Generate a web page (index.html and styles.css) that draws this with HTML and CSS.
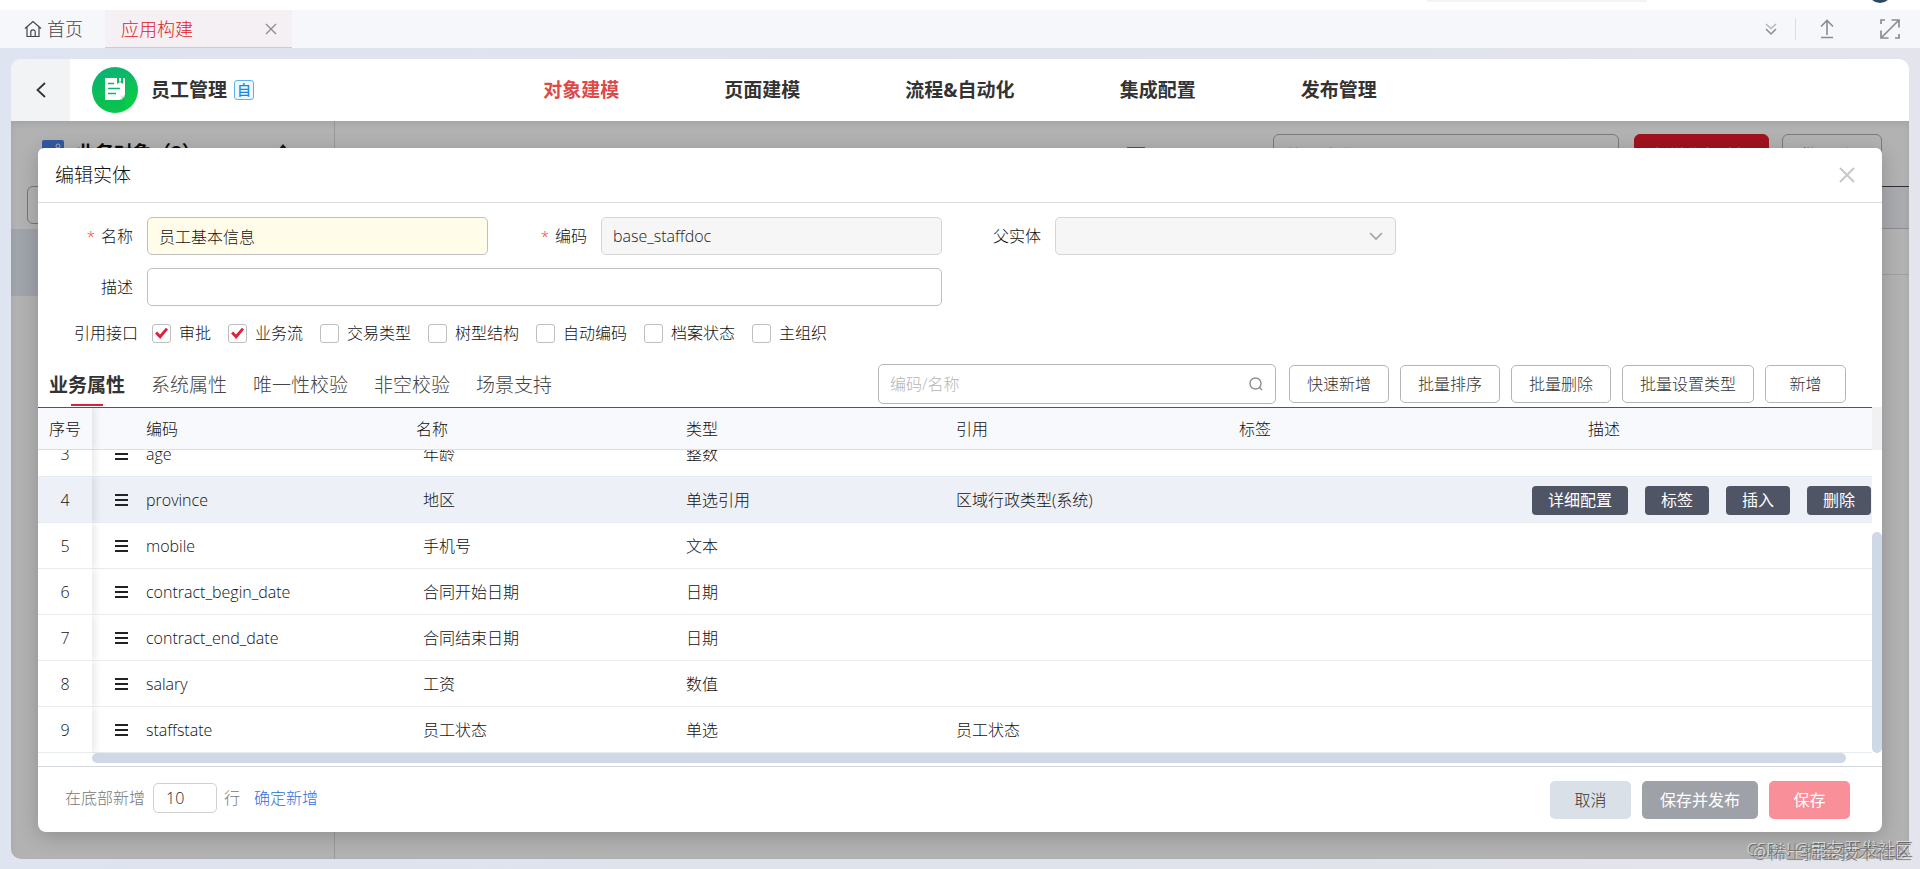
FILE: index.html
```html
<!DOCTYPE html>
<html lang="zh-CN">
<head>
<meta charset="utf-8">
<meta name="viewport" content="width=device-width, initial-scale=1">
<title>应用构建</title>
<link rel="stylesheet" href="styles.css">
</head>
<body>
<div class="app">
  <div class="topstrip"><span class="topstrip-search"></span><span class="avatar"></span></div>

  <div class="tabbar">
    <a class="home-tab" href="#">
      <svg width="18" height="18" viewBox="0 0 18 18" fill="none" stroke="currentColor" stroke-width="1.2"><path d="M1 8.500 9 1.500l8 7M3 7v9.500h12V7M6.800 16v-4a2.200 2.200 0 0 1 4.400 0v4"/></svg>
      首页
    </a>
    <div class="open-tab">
      <span>应用构建</span>
      <button class="icon-btn" aria-label="关闭标签"><svg width="12" height="12" viewBox="0 0 12 12" fill="none" stroke="currentColor" stroke-width="1.3"><path d="m1 1 10 10M11 1 1 11"/></svg></button>
    </div>
    <div class="tabbar-tools">
      <button class="icon-btn" aria-label="更多"><svg width="12" height="14" viewBox="0 0 12 14" fill="none" stroke="currentColor" stroke-width="1.5"><path opacity=".6" d="m1 2 5 4.500L11 2"/><path d="m1 7 5 5 5-5"/></svg></button>
      <span class="tool-divider"></span>
      <button class="icon-btn" aria-label="收起"><svg width="14" height="20" viewBox="0 0 14 20" fill="none" stroke="currentColor" stroke-width="1.6"><path d="M1 7.500 7 1.500l6 6M7 2v14M1 18.500h12"/></svg></button>
      <button class="icon-btn" aria-label="全屏"><svg width="20" height="20" viewBox="0 0 20 20" fill="none" stroke="currentColor" stroke-width="1.700"><path d="M1 5V1h4M15 19h4v-4M11.500 1H19v7.500M1 11.500V19h7.500M19 1 1 19"/></svg></button>
    </div>
  </div>

  <div class="frame">
    <header class="apphead">
      <button class="back" aria-label="返回"><svg width="10" height="16" viewBox="0 0 10 16" fill="none" stroke="currentColor" stroke-width="1.8"><path d="M9 1 1.500 8 9 15"/></svg></button>
      <div class="brand">
        <svg width="46" height="46" viewBox="0 0 46 46">
          <defs><linearGradient id="g" x1="0" y1="0" x2=".4" y2="1"><stop offset="0" stop-color="#0aae7a"/><stop offset="1" stop-color="#0ccb45"/></linearGradient></defs>
          <circle cx="23" cy="23" r="23" fill="url(#g)"/>
          <path d="M2 32 13 30l20 3v9a23 23 0 0 1-31-10Z" fill="#09bd55" opacity=".6"/>
          <path d="M14 11h11v6l3-2 3 2v-6h1a1 1 0 0 1 1 1v16l-5 5H14a1 1 0 0 1-1-1V12a1 1 0 0 1 1-1Z" fill="#fff"/>
          <path d="M29 33v-4h4Z" fill="#cdeedd"/><path d="M27 11h2v4l-1-1-1 1Z" fill="#fff"/>
          <path d="M16 16.500h6M16 21.500h12M16 26.500h8" stroke="#12b36d" stroke-width="1.500"/>
        </svg>
        <h1>员工管理</h1><span class="badge">自</span>
      </div>
      <nav class="mainnav">
        <a class="on" href="#">对象建模</a><a href="#">页面建模</a><a href="#">流程&amp;自动化</a><a href="#">集成配置</a><a href="#">发布管理</a>
      </nav>
    </header>

    <div class="stage">
      <div class="backdrop-page" aria-hidden="true">
        <aside class="side">
          <div class="side-title"><svg width="22" height="22" viewBox="0 0 22 22"><rect width="22" height="22" rx="2" fill="#4a80e8"/><circle cx="16" cy="6" r="2" fill="none" stroke="#fff"/></svg><b>业务对象（2）</b><svg class="caret" width="10" height="7" viewBox="0 0 10 7"><path d="M5 0 10 6H0Z" fill="#222"/></svg></div>
          <div class="side-search"></div>
          <div class="side-item"></div>
        </aside>
        <div class="content">
          <div class="content-bar"><svg class="view-icon" width="18" height="14" viewBox="0 0 18 14"><path d="M1 1h16v12H1Z" fill="none" stroke="#777" stroke-width="2"/></svg><span class="bg-input">编码/名称</span><span class="bg-primary">新增业务对象</span><span class="bg-btn">批量删除</span></div>
          <div class="content-head"></div>
          <div class="content-row"></div>
        </div>
      </div>
      <div class="mask"></div>

      <section class="modal" role="dialog" aria-labelledby="dlg">
        <div class="modal-head">
          <h2 id="dlg">编辑实体</h2>
          <button class="icon-btn close" aria-label="关闭"><svg width="16" height="16" viewBox="0 0 16 16" fill="none" stroke="currentColor" stroke-width="2"><path d="m1 1 14 14M15 1 1 15"/></svg></button>
        </div>

        <form class="form">
          <label for="name"><i>*</i>名称</label><input class="field warm" id="name" value="员工基本信息">
          <label for="code"><i>*</i>编码</label><input class="field" id="code" value="base_staffdoc" disabled>
          <label for="parent">父实体</label>
          <div class="selectbox"><select class="field" id="parent" disabled><option></option></select><svg width="14" height="9" viewBox="0 0 14 9" fill="none" stroke="#a3a3a3" stroke-width="1.700"><path d="m1 1 6 6 6-6"/></svg></div>
          <label for="desc">描述</label><input class="field wide" id="desc">
        </form>

        <div class="checks">
          <span>引用接口</span>
          <label><input type="checkbox" checked>审批</label>
          <label><input type="checkbox" checked>业务流</label>
          <label><input type="checkbox">交易类型</label>
          <label><input type="checkbox">树型结构</label>
          <label><input type="checkbox">自动编码</label>
          <label><input type="checkbox">档案状态</label>
          <label><input type="checkbox">主组织</label>
        </div>

        <div class="toolbar">
          <div class="tabs">
            <button class="on">业务属性</button><button>系统属性</button><button>唯一性校验</button><button>非空校验</button><button>场景支持</button>
          </div>
          <div class="search">
            <input type="text" placeholder="编码/名称" aria-label="编码/名称">
            <svg width="14" height="14" viewBox="0 0 14 14" fill="none" stroke="#8f8f8f" stroke-width="1.400"><circle cx="6.500" cy="6.500" r="5.500"/><path d="m10 10 3 3"/></svg>
          </div>
          <div class="actions">
            <button>快速新增</button><button>批量排序</button><button>批量删除</button><button>批量设置类型</button><button>新增</button>
          </div>
        </div>

        <div class="grid">
          <div class="grid-head">
            <table>
              <colgroup><col class="c-no"><col class="c-drag"><col class="c-std"><col class="c-std"><col class="c-std"><col class="c-ref"><col class="c-tag"><col></colgroup>
              <thead><tr><th class="no">序号</th><th></th><th>编码</th><th>名称</th><th>类型</th><th>引用</th><th>标签</th><th>描述</th></tr></thead>
            </table>
          </div>
          <div class="grid-body">
            <table>
              <colgroup><col class="c-no"><col class="c-drag"><col class="c-std"><col class="c-std"><col class="c-std"><col class="c-ref"><col class="c-tag"><col></colgroup>
              <tbody>
                <tr><td class="no">3</td><td class="drag"><span></span></td><td>age</td><td class="nm">年龄</td><td>整数</td><td></td><td></td><td></td></tr>
                <tr class="hover"><td class="no">4</td><td class="drag"><span></span></td><td>province</td><td class="nm">地区</td><td>单选引用</td><td>区域行政类型(系统)</td><td class="ops" colspan="2"><div><button>详细配置</button><button>标签</button><button>插入</button><button>删除</button></div></td></tr>
                <tr><td class="no">5</td><td class="drag"><span></span></td><td>mobile</td><td class="nm">手机号</td><td>文本</td><td></td><td></td><td></td></tr>
                <tr><td class="no">6</td><td class="drag"><span></span></td><td>contract_begin_date</td><td class="nm">合同开始日期</td><td>日期</td><td></td><td></td><td></td></tr>
                <tr><td class="no">7</td><td class="drag"><span></span></td><td>contract_end_date</td><td class="nm">合同结束日期</td><td>日期</td><td></td><td></td><td></td></tr>
                <tr><td class="no">8</td><td class="drag"><span></span></td><td>salary</td><td class="nm">工资</td><td>数值</td><td></td><td></td><td></td></tr>
                <tr><td class="no">9</td><td class="drag"><span></span></td><td>staffstate</td><td class="nm">员工状态</td><td>单选</td><td>员工状态</td><td></td><td></td></tr>
              </tbody>
            </table>
            <span class="vbar"></span>
          </div>
          <div class="hbar"><span></span></div>
        </div>

        <div class="modal-foot">
          <label for="rows">在底部新增</label><input id="rows" value="10"><span>行</span><a href="#">确定新增</a>
          <div class="foot-btns"><button class="cancel">取消</button><button class="publish">保存并发布</button><button class="save">保存</button></div>
        </div>
      </section>
    </div>
  </div>
  <div class="marks"><span>CSDN @用友开发社区</span><span class="second">@稀土掘金技术社区</span></div>
</div>
</body>
</html>
```
FILE: styles.css
```css
* { box-sizing: border-box; }

body {
  margin: 0;
  font-family: "Open Sans", "Noto Sans CJK SC", sans-serif;
  font-size: 16px;
  font-weight: 300;
  line-height: 24px;
  color: #111;
}

button, input, select { font: inherit; color: inherit; }
button { cursor: pointer; white-space: nowrap; }
a { text-decoration: none; color: inherit; }
h1, h2 { margin: 0; }

.app {
  position: relative;
  display: flex;
  flex-direction: column;
  height: 100vh;
  overflow: hidden;
  background: linear-gradient(90deg, #dee4f0, #dfe3eb 50%, #e4e4ec);
}

.topstrip {
  display: flex;
  justify-content: flex-end;
  gap: 221px;
  height: 10px;
  padding-right: 28px;
  background: #fff;
  overflow: hidden;
  flex: none;
}
.topstrip-search { width: 220px; height: 2px; background: #f3f3f5; }
.avatar { width: 24px; height: 24px; margin-top: -21px; border-radius: 50%; background: #2c4a5c; }

.tabbar {
  display: flex;
  align-items: stretch;
  flex: none;
  height: 38px;
  background: #f6f7fb;
  font-size: 18px;
  line-height: 34px;
  color: #444;
}
.home-tab { display: flex; align-items: center; gap: 5px; padding: 0 22px 0 24px; }
.open-tab {
  display: flex;
  align-items: center;
  justify-content: space-between;
  width: 187px;
  padding: 0 15px 0 16px;
  background: #f5f0f3;
  border-bottom: 1px solid #f9b9c4;
  color: #e02127;
}
.icon-btn { display: flex; padding: 0; border: 0; background: none; color: #8c8c90; }
.tabbar-tools { display: flex; align-items: center; margin-left: auto; padding-right: 20px; gap: 18px; }
.tabbar-tools .icon-btn:last-child { margin-left: 28px; }
.tool-divider { width: 1px; height: 22px; background: #ddd; }
.tool-divider + .icon-btn { margin-left: 6px; }

.frame {
  display: flex;
  flex-direction: column;
  flex: 1;
  min-height: 0;
  margin: 11px 11px 10px;
  border-radius: 10px;
  overflow: hidden;
  background: #fff;
}
.apphead { display: grid; grid-template-columns: 1fr auto 1fr; height: 62px; flex: none; position: relative; }
.back {
  position: absolute;
  inset: 0 auto 0 0;
  display: flex;
  align-items: center;
  justify-content: center;
  width: 59px;
  padding: 0;
  border: 0;
  background: #f2f3f4;
  color: #333;
}
.brand { display: flex; align-items: center; padding-left: 81px; }
.brand h1 { margin-left: 13px; font-size: 19px; font-weight: 700; color: #333; }
.badge {
  display: flex;
  align-items: center;
  justify-content: center;
  width: 20px;
  height: 20px;
  margin-left: 7px;
  border: 1px solid #5fb0ee;
  border-radius: 3px;
  background: #f0f8ff;
  color: #1788e0;
  font-size: 14px;
  font-weight: 500;
}
.mainnav { display: flex; align-items: center; gap: 105px; font-size: 19px; font-weight: 700; color: #333; white-space: nowrap; }
.mainnav .on { color: #dc4a4a; }

.stage { position: relative; flex: 1; min-height: 0; }
.backdrop-page { display: flex; height: 100%; }
.side { width: 324px; border-right: 1px solid #ddd; padding-top: 12px; }
.side-title { display: flex; align-items: flex-start; gap: 12px; height: 34px; padding: 7px 46px 0 31px; font-size: 19px; }
.side-title b { font-weight: 700; line-height: 26px; }
.side-title .caret { margin: 4px 0 0 auto; }
.side-search { height: 38px; margin: 19px 16px 5px; border: 1px solid #aaa; border-radius: 6px; }
.side-item { height: 67px; background: #e6ebf5; }
.content { flex: 1; }
.content-bar { display: flex; justify-content: flex-end; gap: 13px; height: 65px; padding: 13px 27px 14px 0; }
.content-bar span { border-radius: 6px; border: 1px solid #b0b0b0; line-height: 40px; padding: 0 18px; }
.view-icon { margin: 13px 115px 0 0; }
.content-bar .bg-input { width: 346px; margin-right: 2px; padding: 0 12px; color: #999; }
.content-bar .bg-primary { width: 135px; background: #e61b2c; border-color: #e61b2c; color: #fff; }
.content-bar .bg-btn { width: 100px; }
.content-head { height: 43px; background: #f3f5fb; border-top: 1px solid #444; border-bottom: 1px solid #ccc; }
.content-row { height: 46px; border-bottom: 1px solid #e4e4e4; }
.mask { position: absolute; inset: 0; background: rgba(0, 0, 0, .3); box-shadow: inset 0 3px 6px rgba(0, 0, 0, .08); }

.modal {
  position: absolute;
  inset: 27px 27px 27px;
  display: flex;
  flex-direction: column;
  border-radius: 6px 6px 8px 8px;
  background: #fff;
  box-shadow: 0 4px 20px rgba(0, 0, 0, .2);
  overflow-x: clip;
}
.modal, .grid { min-height: 0; }
.modal-head {
  display: flex;
  align-items: center;
  justify-content: space-between;
  height: 55px;
  padding: 0 27px 0 17px;
  border-bottom: 1px solid #d9dbdc;
  flex: none;
}
.modal-head h2 { font-size: 19px; font-weight: 300; }
.modal-head .close { color: #c8c8c8; }

.form {
  display: grid;
  grid-template-columns: 109px minmax(0, 341px) 113px minmax(0, 341px) 113px minmax(0, 341px);
  row-gap: 13px;
  padding-top: 14px;
}
.form label { display: flex; align-items: center; justify-content: flex-end; gap: 6px; padding-right: 14px; }
.form i { font-style: normal; color: #e33; font-size: 15px; }
.field {
  width: 100%;
  height: 38px;
  padding: 0 11px;
  border: 1px solid #bfbfbf;
  border-radius: 5px;
  background: #fff;
}
.field:disabled { background: #f6f6f6; border-color: #d5d5d5; color: #222; opacity: 1; }
.warm { background: #fffdea; }
.wide { grid-column: span 3; }
.selectbox { display: grid; align-items: center; }
.selectbox > * { grid-area: 1 / 1; }
.selectbox select { appearance: none; }
.selectbox svg { justify-self: end; margin-right: 13px; }

.checks { display: flex; align-items: center; gap: 17px; height: 24px; margin-top: 15px; padding-left: 36px; }
.checks > span { margin-right: -3px; }
.checks label { display: flex; align-items: center; gap: 8px; }
.checks input {
  appearance: none;
  display: grid;
  place-items: center;
  width: 19px;
  height: 19px;
  margin: 0;
  border: 1px solid #bfbfbf;
  border-radius: 3px;
}
.checks input:checked::before {
  content: "";
  width: 13px;
  height: 12px;
  background: #e0233c;
  clip-path: polygon(0 54%, 16% 38%, 38% 62%, 84% 6%, 100% 20%, 40% 100%);
}

.toolbar { display: flex; align-items: stretch; height: 43px; margin-top: 19px; padding-right: 36px; flex: none; }
.tabs { display: flex; gap: 26px; padding-left: 11px; font-size: 19px; color: #444; }
.tabs button { display: flex; flex-direction: column; justify-content: space-between; align-items: center; padding: 7px 0 0; border: 0; background: none; line-height: 28px; }
.tabs button::after { content: ""; width: 32px; height: 2px; margin-bottom: 1px; }
.tabs .on { font-weight: 700; color: #333; }
.tabs .on::after { background: #d0263c; }
.search { display: grid; align-items: center; width: 398px; height: 40px; margin-left: auto; }
.search > * { grid-area: 1 / 1; }
.search input { width: 100%; height: 40px; padding: 0 11px; border: 1px solid #b5b5b5; border-radius: 5px; }
.search input::placeholder { color: #b5b5b5; opacity: 1; }
.search svg { justify-self: end; margin-right: 13px; }
.actions { display: flex; gap: 11px; padding-top: 1px; margin-left: 13px; }
.actions button { height: 38px; min-width: 81px; padding: 0 17px; border: 1px solid #b5b5b5; border-radius: 5px; background: #fff; color: #333; }

.grid { flex: 1; display: flex; flex-direction: column; }
.grid table { width: 100%; table-layout: fixed; border-collapse: separate; border-spacing: 0; }
.c-no { width: 54px; }
.c-drag { width: 38px; }
.c-std { width: 270px; }
.c-ref { width: 283px; }
.c-tag { width: 349px; }
.grid th, .grid td { padding: 0 0 0 16px; text-align: left; font-weight: 300; white-space: nowrap; color: #111; }
.grid .no { padding: 0; text-align: center; background: #fff; box-shadow: 4px 0 6px rgba(0, 0, 0, .08); clip-path: inset(0 -12px 0 0); }
.grid-head { padding-right: 10px; background: #f1f1f3; flex: none; }
.grid-head th, .grid-head th.no { height: 43px; background: #f8f9fd; border-top: 1px solid #555; border-bottom: 1px solid #dcdfe2; }
.grid-head .no, .grid-body .no { position: relative; }
.grid-body {
  position: relative;
  flex: 1;
  min-height: 0;
  display: flex;
  flex-direction: column;
  justify-content: flex-end;
  overflow: hidden;
  padding-right: 10px;
}
.grid-body td { height: 46px; border-bottom: 1px solid #e9ecef; }
.grid-body .nm { padding-left: 23px; }
.grid-body .drag { padding-left: 23px; }
.drag span { display: block; width: 13px; height: 12px; background: repeating-linear-gradient(#222 0 2px, transparent 2px 5px); }
.hover td, .grid-body .hover .no { background: #edf0f6; }
.grid-body .ops { padding-right: 1px; }
.ops div { display: flex; justify-content: flex-end; gap: 17px; padding-top: 1px; }
.ops button { height: 29px; padding: 0 16px; border: 0; border-radius: 4px; background: #505565; color: #fff; font-weight: 400; line-height: 29px; }
.vbar { position: absolute; right: 0; bottom: 0; width: 10px; height: 221px; border-radius: 5px; background: #cfd8e6; }
.hbar { height: 13px; padding: 0 36px 3px 54px; flex: none; }
.hbar span { display: block; height: 10px; border-radius: 5px; background: #cfd8e6; }

.modal-foot {
  display: flex;
  align-items: center;
  flex: none;
  height: 66px;
  padding: 0 32px 4px 27px;
  border-top: 1px solid #d5d8da;
  color: #777;
}
.modal-foot input { width: 64px; height: 30px; margin: 0 7px 0 8px; padding: 0 12px; border: 1px solid #d0d0d0; border-radius: 5px; color: #222; }
.modal-foot a { margin-left: 14px; color: #2f6fdc; }
.foot-btns { display: flex; gap: 11px; margin: 4px 0 0 auto; }
.foot-btns button { height: 38px; min-width: 81px; padding: 0 18px; border: 0; border-radius: 5px; color: #fff; font-weight: 400; }
.foot-btns .cancel { background: #dae0e7; color: #333; font-weight: 300; }
.foot-btns .publish { background: #9fa1a8; }
.foot-btns .save { background: #f98f98; }

.marks { position: absolute; right: 8px; bottom: 5px; display: grid; justify-items: end; color: #e0e0e0; font-size: 17px; text-shadow: 1px 1px 1px #444; }
.marks span { grid-area: 1 / 1; }
.marks .second { margin-top: 3px; font-size: 18px; color: #777; text-shadow: 1px 1px 0 #ddd; }
```
